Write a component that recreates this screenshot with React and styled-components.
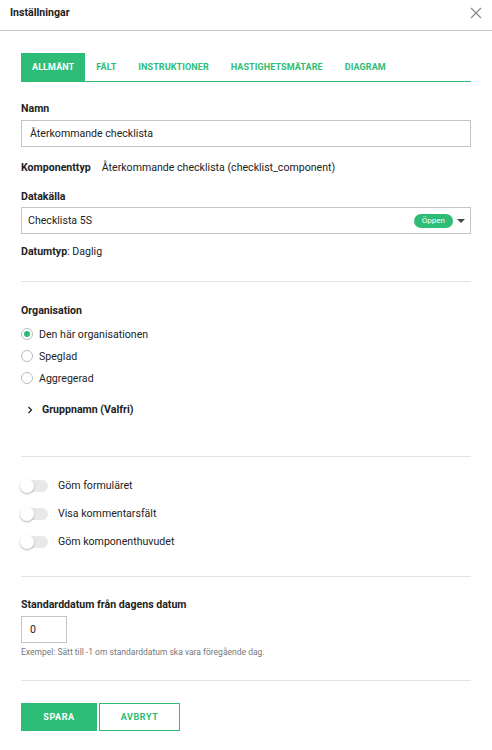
import React, { useState } from 'react';
import styled, { createGlobalStyle } from 'styled-components';

const green = '#2dbd76';

const GlobalStyle = createGlobalStyle`
  body {
    margin: 0;
    background: #fff;
    font-family: Roboto, 'Liberation Sans', Arial, sans-serif;
    color: #222;
  }
`;

const Modal = styled.div`
  width: 492px;
  min-height: 750px;
  background: #fff;
`;

const Header = styled.header`
  display: flex;
  align-items: center;
  justify-content: space-between;
  padding: 6px 10px 10px;
  border-bottom: 1px solid #c9c9c9;
`;

const Title = styled.h2`
  margin: 0;
  font-size: 10.6px;
  line-height: 14px;
  font-weight: 700;
  color: #222;
`;

const Close = styled.button`
  display: flex;
  border: 0;
  background: none;
  padding: 0;
  cursor: pointer;
`;

const Body = styled.div`
  padding: 22px 21px 0;
`;

const Tabs = styled.nav`
  display: flex;
  border-bottom: 1.5px solid ${green};
  margin-bottom: 20px;
`;

const Tab = styled.button`
  height: 28px;
  padding: 0 11px;
  border: 0;
  background: ${(p) => (p.$active ? green : 'transparent')};
  color: ${(p) => (p.$active ? '#fff' : green)};
  font-family: inherit;
  font-size: 9px;
  font-weight: 700;
  letter-spacing: 0.1px;
  text-transform: uppercase;
`;

const Label = styled.div`
  font-size: 10.6px;
  line-height: 14px;
  font-weight: 700;
  color: #222;
  margin-bottom: ${(p) => (p.$mb !== undefined ? p.$mb : 4)}px;
`;

const TextInput = styled.input`
  box-sizing: border-box;
  width: ${(p) => p.$width || '100%'};
  height: 27px;
  padding: 0 8px;
  border: 1px solid #c4c4c4;
  font-family: inherit;
  font-size: 10.6px;
  color: #222;
  outline: none;
`;

const InfoRow = styled.div`
  display: flex;
  gap: 11px;
  font-size: 10.6px;
  line-height: 14px;
  margin: ${(p) => p.$margin || '0'};
  color: #222;

  b {
    font-weight: 700;
  }
`;

const Select = styled.div`
  box-sizing: border-box;
  display: flex;
  align-items: center;
  height: 27px;
  padding: 0 5px 0 6px;
  border: 1px solid #c4c4c4;
  font-size: 10.6px;
  color: #222;
`;

const SelectValue = styled.span`
  flex: 1;
`;

const Badge = styled.span`
  display: inline-flex;
  align-items: center;
  justify-content: center;
  height: 14px;
  padding: 0 8px;
  border-radius: 7px;
  background: ${green};
  color: #fff;
  font-size: 8px;
  margin-right: 4px;
`;

const Caret = styled.span`
  width: 0;
  height: 0;
  border-left: 4px solid transparent;
  border-right: 4px solid transparent;
  border-top: 4px solid #444;
`;

const Divider = styled.hr`
  border: 0;
  border-top: 1px solid #e3e3e3;
  margin: ${(p) => p.$margin};
`;

const RadioGroup = styled.div`
  display: flex;
  flex-direction: column;
`;

const RadioRow = styled.label`
  display: flex;
  align-items: center;
  gap: 6px;
  height: 22px;
  font-size: 10.6px;
  color: #222;
`;

const RadioDot = styled.span`
  box-sizing: border-box;
  width: 12px;
  height: 12px;
  border-radius: 50%;
  border: 1px solid #bdbdbd;
  display: flex;
  align-items: center;
  justify-content: center;

  &::after {
    content: '';
    width: 6px;
    height: 6px;
    border-radius: 50%;
    background: ${(p) => (p.$checked ? green : 'transparent')};
  }
`;

const Collapse = styled.div`
  display: flex;
  align-items: center;
  gap: 9px;
  margin: 14px 0 0 6px;
  font-size: 10.6px;
  line-height: 14px;
  font-weight: 700;
  color: #222;
`;

const ToggleList = styled.div`
  display: flex;
  flex-direction: column;
  gap: 14px;
`;

const ToggleRow = styled.label`
  display: flex;
  align-items: center;
  gap: 10px;
  font-size: 10.6px;
  line-height: 14px;
  color: #222;
`;

const Track = styled.span`
  position: relative;
  width: 27px;
  height: 12px;
  border-radius: 6px;
  background: #e8e8e8;

  &::after {
    content: '';
    position: absolute;
    left: -1px;
    top: -1px;
    width: 14px;
    height: 14px;
    border-radius: 50%;
    background: #fff;
    box-shadow: 0 1px 2px rgba(0, 0, 0, 0.3);
  }
`;

const Help = styled.div`
  margin-top: 3px;
  font-size: 8.5px;
  line-height: 12px;
  color: #777;
`;

const Actions = styled.div`
  display: flex;
  gap: 2px;
`;

const Button = styled.button`
  box-sizing: border-box;
  height: 28px;
  width: ${(p) => p.$width}px;
  border: 1px solid ${green};
  background: ${(p) => (p.$primary ? green : '#fff')};
  color: ${(p) => (p.$primary ? '#fff' : green)};
  font-family: inherit;
  font-size: 9px;
  font-weight: 700;
  letter-spacing: 0.6px;
  text-transform: uppercase;
`;

const tabs = ['Allmänt', 'Fält', 'Instruktioner', 'Hastighetsmätare', 'Diagram'];
const orgs = ['Den här organisationen', 'Speglad', 'Aggregerad'];
const toggles = ['Göm formuläret', 'Visa kommentarsfält', 'Göm komponenthuvudet'];

export default function App() {
  const [tab, setTab] = useState(0);
  const [org, setOrg] = useState(0);

  return (
    <Modal>
      <GlobalStyle />
      <Header>
        <Title>Inställningar</Title>
        <Close aria-label='Stäng'>
          <svg width='12' height='12' viewBox='0 0 12 12'>
            <path d='M1 1L11 11M11 1L1 11' stroke='#888' strokeWidth='1.2' />
          </svg>
        </Close>
      </Header>
      <Body>
        <Tabs>
          {tabs.map((t, i) => (
            <Tab key={t} $active={tab === i} onClick={() => setTab(i)}>
              {t}
            </Tab>
          ))}
        </Tabs>

        <Label>Namn</Label>
        <TextInput defaultValue='Återkommande checklista' />

        <InfoRow $margin='14px 0 15px'>
          <b>Komponenttyp</b>
          <span>Återkommande checklista (checklist_component)</span>
        </InfoRow>

        <Label $mb={3}>Datakälla</Label>
        <Select>
          <SelectValue>Checklista 5S</SelectValue>
          <Badge>Öppen</Badge>
          <Caret />
        </Select>

        <InfoRow $margin='11px 0 0'>
          <span>
            <b>Datumtyp</b>: Daglig
          </span>
        </InfoRow>

        <Divider $margin='22px 0 22px' />

        <Label $mb={5}>Organisation</Label>
        <RadioGroup>
          {orgs.map((o, i) => (
            <RadioRow key={o} onClick={() => setOrg(i)}>
              <RadioDot $checked={org === i} />
              {o}
            </RadioRow>
          ))}
        </RadioGroup>
        <Collapse>
          <svg width='6' height='8' viewBox='0 0 6 8'>
            <path d='M1.5 1L4.5 4L1.5 7' fill='none' stroke='#222' strokeWidth='1.3' />
          </svg>
          Gruppnamn (Valfri)
        </Collapse>

        <Divider $margin='39px 0 22px' />

        <ToggleList>
          {toggles.map((t) => (
            <ToggleRow key={t}>
              <Track />
              {t}
            </ToggleRow>
          ))}
        </ToggleList>

        <Divider $margin='27px 0 21px' />

        <Label $mb={4}>Standarddatum från dagens datum</Label>
        <TextInput $width='46px' defaultValue='0' />
        <Help>Exempel: Sätt till -1 om standarddatum ska vara föregående dag.</Help>

        <Divider $margin='22px 0 22px' />

        <Actions>
          <Button $primary $width={76}>Spara</Button>
          <Button $width={81}>Avbryt</Button>
        </Actions>
      </Body>
    </Modal>
  );
}
